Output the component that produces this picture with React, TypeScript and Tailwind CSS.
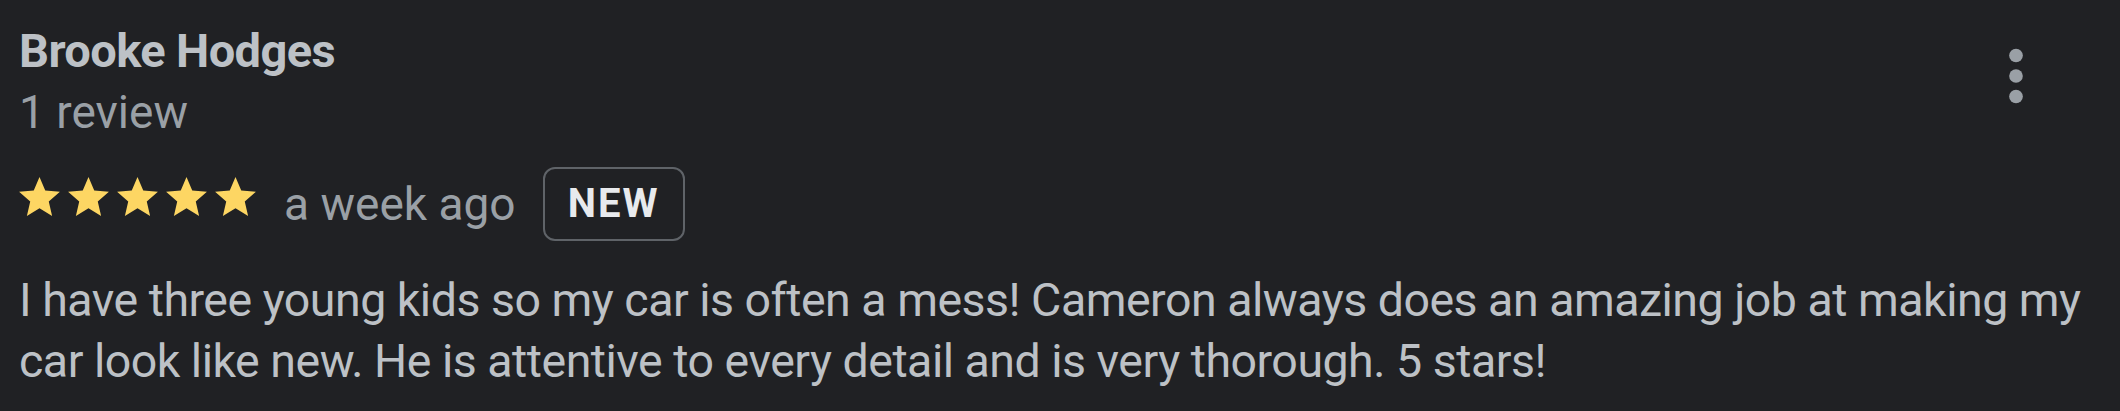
import React from "react";

const STAR = "M12 17.27L18.18 21l-1.64-7.03L22 9.24l-7.19-.61L12 2 9.19 8.63 2 9.24l5.46 4.73L5.82 21z";

function Star() {
  return (
    <svg viewBox="0 0 24 24" className="h-[49px] w-[49px] shrink-0" fill="#fdd663">
      <path d={STAR} />
    </svg>
  );
}

function MoreVert() {
  return (
    <svg viewBox="0 0 24 24" className="h-[82px] w-[82px]" fill="#9aa0a6">
      <circle cx="12" cy="6" r="2" />
      <circle cx="12" cy="12" r="2" />
      <circle cx="12" cy="18" r="2" />
    </svg>
  );
}

export default function App() {
  return (
    <div className="min-h-[411px] w-full bg-[#202124] px-[19px] pt-[20px] font-['Roboto',sans-serif]">
      <div className="flex items-start justify-between">
        <div>
          <div className="text-[47px] font-bold leading-[62px] tracking-[-0.6px] text-[#bdc1c6]">Brooke Hodges</div>
          <div className="text-[46px] leading-[60px] text-[#9aa0a6]">1 review</div>
        </div>
        <button className="mr-[44px] mt-[15px]" aria-label="More options">
          <MoreVert />
        </button>
      </div>

      <div className="mt-[25px] flex items-center">
        <div className="-ml-[4px] mb-[13px] flex">
          <Star />
          <Star />
          <Star />
          <Star />
          <Star />
        </div>
        <span className="ml-[24px] text-[46px] leading-[60px] text-[#9aa0a6]">a week ago</span>
        <span className="ml-[27px] flex h-[74px] w-[142px] items-center justify-center rounded-[12px] border-2 border-[#5f6368] text-[40px] font-bold tracking-[2px] text-[#e8eaed]">
          NEW
        </span>
      </div>

      <p className="mt-[29px] text-[46.5px] leading-[61px] tracking-[-0.5px] text-[#bdc1c6]">
        I have three young kids so my car is often a mess! Cameron always does an amazing job at making my car look
        like new. He is attentive to every detail and is very thorough. 5 stars!
      </p>
    </div>
  );
}
